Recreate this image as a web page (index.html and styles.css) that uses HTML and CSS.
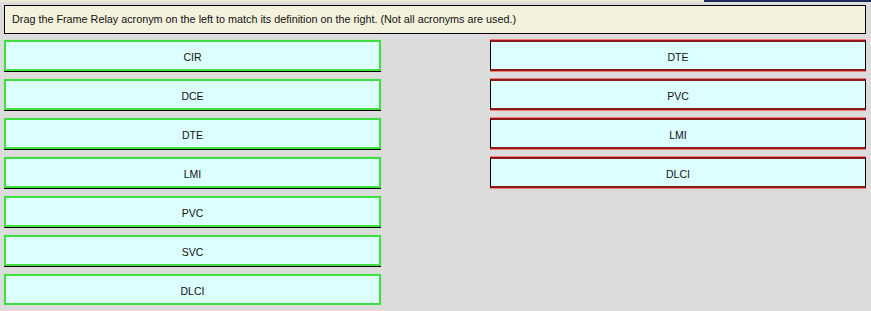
FILE: index.html
```html
<!DOCTYPE html>
<html lang="en">
<head>
    <meta charset="UTF-8">
    <title>Frame Relay Drag and Drop</title>
    <link rel="stylesheet" href="styles.css">
</head>
<body>
    <div class="topline"></div>
    <div class="question">Drag the Frame Relay acronym on the left to match its definition on the right. (Not all acronyms are used.)</div>

    <div class="board">
        <!-- acronyms to drag -->
        <div class="column sources">
            <div class="tile source">CIR</div>
            <div class="tile source">DCE</div>
            <div class="tile source">DTE</div>
            <div class="tile source">LMI</div>
            <div class="tile source">PVC</div>
            <div class="tile source">SVC</div>
            <div class="tile source">DLCI</div>
        </div>

        <!-- answer slots -->
        <div class="column targets">
            <div class="tile target">DTE</div>
            <div class="tile target">PVC</div>
            <div class="tile target">LMI</div>
            <div class="tile target">DLCI</div>
        </div>
    </div>
</body>
</html>
```

FILE: styles.css
```css
body {
    margin: 0;
    background-color: #dcdcdc;
    font-family: Tahoma, "Liberation Sans", Arial, sans-serif;
    font-size: 10.5px;
    color: #111;
}
.topline {
    height: 2px;
    background: linear-gradient(to right, #eeead4 0, #eeead4 704px, #1c2a55 704px);
}
.question {
    margin: 3px 5px 0 4px;
    height: 27px;
    line-height: 27px;
    padding-left: 7px;
    border: 1px solid #000;
    background-color: #f4f1dc;
    font-size: 10.8px;
}
.board {
    display: flex;
    justify-content: space-between;
    padding: 6px 5px 0 4px;
}
.column {
    display: flex;
    flex-direction: column;
    gap: 8px;
}
.sources {
    width: 377px;
}
.targets {
    width: 376px;
}
.tile {
    box-sizing: border-box;
    height: 31px;
    padding-top: 2px;
    background-color: #dcffff;
    display: flex;
    align-items: center;
    justify-content: center;
}
.source {
    border: 2px solid #41dd41;
    box-shadow: 0 1px 0 #000, 0 0 1px #8aee8a;
}
.target {
    border-left: 1px solid #000;
    border-right: 1px solid #000;
    border-top: 2px solid #8e1a1a;
    border-bottom: 2px solid #8e1a1a;
    box-shadow: 0 -1px 0 #f07a7a, 0 1px 0 #f07a7a;
}
```
